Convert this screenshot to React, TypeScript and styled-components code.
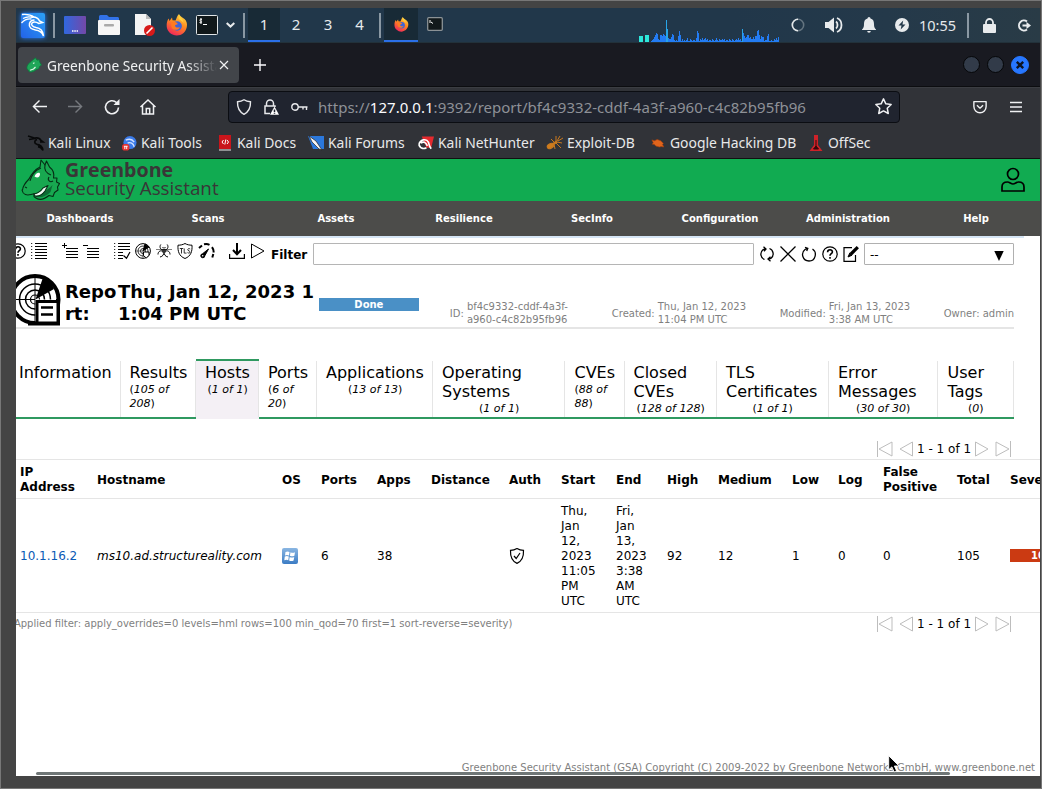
import React from "react";
import styled, { createGlobalStyle } from "styled-components";

const Global = createGlobalStyle`
  * { box-sizing: border-box; }
  body { margin: 0; background: #444; }
  svg { display: block; flex: none; overflow: visible; }
`;

const Frame = styled.div`
  width: 1042px;
  height: 789px;
  padding: 7px 1px 12px 15px;
  background: #444;
  border: 1px solid #777;
`;
const Desktop = styled.div`
  display: flex;
  flex-direction: column;
  position: relative;
  width: 1024px;
  height: 768px;
  overflow: hidden;
  background: #fff;
  font-family: "Noto Sans", sans-serif;
`;

/* ---------- desktop panel ---------- */
const Panel = styled.div`
  display: flex;
  align-items: center;
  height: 34px;
  flex: none;
  background: linear-gradient(90deg, #21374a 0 70%, #24394a 85%, #293b46);
  color: #e6eaec;
  & > * { flex: none; }
`;
const PanelIcon = styled.div<{ $w: number }>`
  width: ${(p) => p.$w}px;
  display: flex;
  justify-content: center;
  align-items: center;
`;
const Divider = styled.div<{ $l?: number; $r?: number }>`
  width: 2px;
  height: 25px;
  margin: 0 ${(p) => p.$r ?? 0}px 0 ${(p) => p.$l ?? 0}px;
  background: #8a98a3;
`;
const Workspace = styled.div<{ $on?: boolean; $w?: number }>`
  width: ${(p) => p.$w ?? 32}px;
  height: 34px;
  display: flex;
  align-items: center;
  justify-content: center;
  font-size: 15px;
  background: ${(p) => (p.$on ? "#182a36" : "transparent")};
  border-bottom: 2px solid ${(p) => (p.$on ? "#2b6fe8" : "transparent")};
`;
const Clock = styled.div`
  width: 39px;
  font-size: 14.5px;
  text-align: center;
  white-space: nowrap;
`;

/* ---------- browser ---------- */
const TabStrip = styled.div`
  display: flex;
  align-items: center;
  height: 45px;
  flex: none;
  background: #191a21;
  border-top: 1px solid #22313a;
  border-bottom: 1px solid #0c0d10;
  padding: 3px 11px 3px 2px;
`;
const BrowserTab = styled.div`
  display: flex;
  align-items: center;
  width: 221px;
  height: 36px;
  padding-left: 8px;
  border-radius: 4px;
  background: #42454a;
  color: #f0f1f2;
`;
const TabTitle = styled.div`
  width: 170px;
  margin: 1px 3px 0 5px;
  overflow: hidden;
  white-space: nowrap;
  font-size: 13.7px;
  mask-image: linear-gradient(90deg, #000 82%, transparent);
`;
const NewTab = styled.div`
  margin-left: 15px;
  flex: 1;
`;
const WinButton = styled.div<{ $close?: boolean }>`
  width: ${(p) => (p.$close ? 18 : 17)}px;
  height: ${(p) => (p.$close ? 18 : 17)}px;
  margin-left: 7px;
  border-radius: 50%;
  border: 1px solid ${(p) => (p.$close ? "#2777ff" : "#050608")};
  background: ${(p) => (p.$close ? "#2777ff" : "#323b49")};
  display: flex;
  align-items: center;
  justify-content: center;
`;
const NavBar = styled.div`
  display: flex;
  align-items: center;
  height: 40px;
  flex: none;
  background: #313338;
  border-top: 1px solid #3b3d42;
  padding: 0 18px 2px 16px;
`;
const NavIcon = styled.div<{ $r: number }>`
  margin-right: ${(p) => p.$r}px;
`;
const UrlBox = styled.div`
  display: flex;
  align-items: center;
  width: 672px;
  height: 32px;
  padding: 0 7px;
  border-radius: 4px;
  background: #20242f;
  border: 1px solid #0b0d12;
`;
const Url = styled.div`
  flex: 1;
  margin-left: 10px;
  font-size: 15px;
  color: #8e9197;
  white-space: nowrap;
  letter-spacing: 0.02px;
  b { font-weight: 400; color: #fbfbfe; }
`;
const EndTools = styled.div`
  display: flex;
  align-items: center;
  gap: 23px;
  margin-left: auto;
`;
const Bookmarks = styled.div`
  display: flex;
  align-items: center;
  height: 32px;
  flex: none;
  background: #313338;
  border-bottom: 1px solid #111;
  padding-left: 12px;
  color: #e8e9ea;
  font-size: 13.9px;
`;
const Bookmark = styled.div<{ $w: number }>`
  display: flex;
  align-items: center;
  gap: 4px;
  width: ${(p) => p.$w}px;
  flex: none;
  white-space: nowrap;
`;

/* ---------- application header ---------- */
const Brand = styled.div`
  display: flex;
  height: 42px;
  flex: none;
  background: #11ab51;
  padding-left: 5px;
`;
const BrandText = styled.div`
  margin-left: 4px;
  flex: 1;
  color: #393637;
  font-family: "Open Sans", sans-serif;
  line-height: 18px;
  padding-top: 2px;
`;
const BrandName = styled.div`
  font-weight: 700;
  font-size: 19.6px;
`;
const BrandSub = styled.div`
  font-size: 18.8px;
`;
const UserSlot = styled.div`
  padding: 8px 15px 0 0;
`;
const Menu = styled.div`
  display: flex;
  align-items: center;
  height: 35px;
  flex: none;
  background: #4c4c4a;
`;
const MenuItem = styled.div`
  width: 128px;
  text-align: center;
  color: #fff;
  font: 700 10px "DejaVu Sans", sans-serif;
`;

/* ---------- page ---------- */
const Page = styled.div`
  flex: 1;
  display: flex;
  flex-direction: column;
  overflow: hidden;
  font-family: "DejaVu Sans", sans-serif;
  font-size: 12px;
  line-height: 15px;
  color: #000;
`;
const BlueLine = styled.div`
  width: 1008px;
  height: 2px;
  flex: none;
  background: #d5e5f5;
`;
const ToolRow = styled.div`
  display: flex;
  height: 32px;
  flex: none;
  margin-left: -6px;
  padding-top: 5px;
`;
const Group = styled.div<{ $r: number; $t?: number }>`
  display: flex;
  gap: 5px;
  margin-right: ${(p) => p.$r}px;
  padding-top: ${(p) => p.$t ?? 0}px;
`;
const FilterLabel = styled.div`
  width: 42px;
  font-weight: 700;
  font-size: 12px;
  line-height: 24px;
`;
const FilterInput = styled.div`
  width: 441px;
  height: 22px;
  border: 1px solid #b5b5b5;
  margin-right: 5px;
  border-radius: 1px;
`;
const SelectBox = styled.div`
  display: flex;
  justify-content: space-between;
  width: 150px;
  height: 22px;
  border: 1px solid #b0b0b0;
  border-radius: 1px;
  padding: 0 9px 0 5px;
  font-size: 12px;
  line-height: 22px;
`;
const ReportHead = styled.div`
  display: flex;
  width: 998px;
  height: 59px;
  flex: none;
  border-bottom: 2px solid #e5e5e5;
`;
const ReportIcon = styled.div`
  width: 57px;
  margin: 4px 0 0 -8px;
`;
const Title = styled.div<{ $w: number }>`
  width: ${(p) => p.$w}px;
  padding-top: 11px;
  font-weight: 700;
  font-size: 18px;
  line-height: 22px;
  white-space: nowrap;
`;
const Done = styled.div`
  width: 100px;
  height: 13px;
  margin: 28px 0 0 1px;
  background: #4a90c6;
  color: #fff;
  font-weight: 700;
  font-size: 10px;
  line-height: 14px;
  text-align: center;
`;
const Info = styled.div<{ $l: number; $w?: number }>`
  display: flex;
  align-items: center;
  gap: 3px;
  width: ${(p) => (p.$w ? p.$w + "px" : "auto")};
  margin-left: ${(p) => p.$l}px;
  padding-top: 30px;
  height: 56px;
  color: #7f7f7f;
  font-size: 10px;
  line-height: 13px;
  white-space: nowrap;
  & > span:first-child { padding-top: 1px; }
`;
const Tabs = styled.div`
  display: flex;
  width: 998px;
  height: 60px;
  flex: none;
  margin-top: 30px;
`;
const Tab = styled.div<{ $w: number; $l?: number; $on?: boolean }>`
  width: ${(p) => p.$w}px;
  flex: none;
  padding-left: ${(p) => p.$l ?? 9}px;
  padding-top: 2px;
  border-top: 2px solid ${(p) => (p.$on ? "#2f9960" : "transparent")};
  border-bottom: 2px solid ${(p) => (p.$on ? "#f4f0f5" : "#2f9960")};
  background: ${(p) => (p.$on ? "#f4f0f5" : "#fff")};
  background-clip: padding-box;
  box-shadow: inset -1px 0 0 #e5e5e5;
  white-space: nowrap;
`;
const TabName = styled.div`
  font-size: 16px;
  line-height: 19px;
`;
const TabCount = styled.div<{ $in?: number }>`
  font-size: 11px;
  line-height: 14px;
  padding-top: 1px;
  padding-left: ${(p) => p.$in ?? 0}px;
`;
const PagerRow = styled.div<{ $t: number }>`
  display: flex;
  height: 20px;
  margin-top: ${(p) => p.$t}px;
`;
const PagerNote = styled.div`
  width: 862px;
  margin-left: -6px;
  color: #7f7f7f;
  font-size: 10px;
  line-height: 20px;
  white-space: nowrap;
`;
const Pager = styled.div`
  display: flex;
  align-items: center;
  gap: 5px;
  margin-left: 5px;
  white-space: nowrap;
`;
const PagerText = styled.span`
  width: 54px;
  margin: 0 -2px 0 -2px;
  padding-top: 1px;
`;
const Grid = styled.div<{ $h: number }>`
  display: grid;
  grid-template-columns: 77px 185px 39px 56px 54px 78px 52px 55px 51px 51px 74px 46px 45px 74px 53px 100px;
  align-items: center;
  height: ${(p) => p.$h}px;
  flex: none;
  padding-left: 4px;
  border-top: 1px solid #e5e5e5;
  & > span, & > a, & > i { padding-top: 2px; }
`;
const Th = styled.span`
  font-weight: 700;
`;
const Link = styled.a`
  color: #0a5ab5;
`;
const Severity = styled.div`
  width: 100px;
  height: 13px;
  background: #cb3a12;
  color: #fff;
  font-weight: 700;
  font-size: 10px;
  line-height: 14px;
  text-align: left;
  padding-left: 21px;
`;
const HostTable = styled.div`
  border-bottom: 1px solid #e5e5e5;
  flex: none;
`;
const Footer = styled.div`
  margin-top: auto;
  padding: 0 5px 1px 0;
  text-align: right;
  color: #7f7f7f;
  font-size: 10px;
`;
const ScrollBar = styled.div`
  position: absolute;
  left: 20px;
  top: 764px;
  width: 914px;
  height: 3px;
  background: #707777;
  border-radius: 2px;
`;
const Cursor = styled.div`
  position: absolute;
  left: 872px;
  top: 747px;
`;

/* ---------- drawings ---------- */
type IconProps = { s?: number; h?: number; vb?: string; c?: string; w?: number; children: React.ReactNode };
const Icon = ({ s = 16, h, vb = "0 0 16 16", c = "#000", w = 1, children }: IconProps) => (
  <svg width={s} height={h ?? s} viewBox={vb} fill="none" stroke={c} strokeWidth={w}>{children}</svg>
);

const KaliLogo = () => (
  <svg width="26" height="27" viewBox="0 0 26 27" style={{ filter: "drop-shadow(0 0 2px #2a7fff)" }}>
    <defs><linearGradient id="kl" x1="0" y1="1" x2="1" y2="0"><stop stopColor="#2363e8" /><stop offset="1" stopColor="#2ba0f5" /></linearGradient></defs>
    <rect x="1" y="1" width="24" height="25" rx="2" fill="url(#kl)" />
    <g fill="none" stroke="#fff" strokeWidth="1.300">
      <path d="M2 2.500c5-.5 9 .2 12 2.500M3 6.500c3-1.800 6-2.200 10-1M1.500 11c3-3.500 6-4.500 10-4" />
      <path d="M11.500 5c4-.5 7 1.500 8 4l3 1.500-3.500 1c-2.500-1.500-5-2.500-7-.5-1.500 2 1 4 4 4.500 4 .5 7 3 7.500 8.500-1.500-4-4-5.500-8-6-4-.6-7-2.500-6-6.500.6-2 2-3.500 5-3.500" strokeWidth="1.500" />
    </g>
  </svg>
);

const BlackDragon = () => (
  <Icon c="#08090a" w={1.7}>
    <path d="M0 1l8 2.500M1 4.500l6-1M7 3c3-.5 5 .5 6 2.500l2 1.500-3 0M9 4.500c-3 1-3 4 0 4.800 3 .5 5.500 1.500 6 6-1.500-2.500-3-3.300-5-3.600" />
  </Icon>
);

const Firefox = ({ s }: { s: number }) => (
  <svg width={s} height={s} viewBox="0 0 22 22">
    <defs>
      <linearGradient id="ff" x1=".8" y1="0" x2=".3" y2="1"><stop stopColor="#ffe04a" /><stop offset=".45" stopColor="#ff8a1f" /><stop offset="1" stopColor="#f0245c" /></linearGradient>
    </defs>
    <path d="M13 0c.5 2 3 3 5.500 5 2 2 3 4.500 2.300 8-1 5-5 8.500-10 8.500S1 17.500.7 12.500C.5 9 1.200 6.500 2.700 4.500L3.500 7 6 3.500l.5 2.700 3 .3c1-2 1.500-4.500 3.500-6.500z" fill="url(#ff)" />
    <circle cx="11.200" cy="12" r="4.700" fill="#3e64d8" />
    <path d="M5 9c2-2 4-1.500 5.500-.5L12 10l-3 1.200c0 2 2 3 5 2-1 3-7 4-8.500 0z" fill="#ff7a22" />
    <path d="M13 1c2 3 4 4 4.500 8-1.500-2.500-3.500-2.500-5-4.500z" fill="#ffd23e" />
  </svg>
);

const Lizard = () => (
  <svg width="16" height="16" viewBox="0 0 16 16">
    <path d="M1 11.500C.5 8 3.500 6 5.500 4L9.500.8l1.500 2.400 2-.5 1 3L15.500 8l-2 1.500-.8 2.500-2.200.3C9 14 6 15.500 3.500 15z" fill="#1fa658" stroke="#0b7a3c" strokeWidth=".8" />
    <path d="M7 6.500l1.500-.7M4 13.200l3.500-1.200 2-2" stroke="#dff5e6" strokeWidth="1.200" fill="none" />
  </svg>
);

const heights = [1,2,3,5,7,9,8,3,2,7,7,6,8,7,6,22,13,4,3,3,5,8,7,2,1,2,1,6,11,7,1,3,1,2,1,2,4,1,1,3,2,1,2,2,1,4,11,9,1,3,2,4,2,3,4,2,3,1,2,2,1,3,2,1,2,4,2,1,3,2,2,3,2,3,1,2,2,1,3,2,1,3,2,1,2,3,2,4,2,3,1,13,9,6,4,5,7,7,4,5,3,3,5,3,6,6,11,12,7,3,6,5,5,1,2,2,6,8,1,1,2,1,1,3,2,4,2,5];
const CpuGraph = () => (
  <svg width="141" height="34" viewBox="0 0 141 34" shapeRendering="crispEdges">
    <rect x="0" y="28" width="4" height="6" fill="#2de8dc" />
    <rect x="6" y="27" width="4" height="7" fill="#2de8dc" />
    {heights.map((v, i) => <rect key={i} x={12 + i} y={34 - v} width="1" height={v} fill={v > 12 ? "#28a5e8" : "#237cf4"} />)}
  </svg>
);

const lines = (x: number, ys: number[], x2 = 16) => ys.map((y) => <path key={y} d={`M${x} ${y}.5H${x2}`} />);
const all = [0, 3, 6, 9, 12, 15];

const HelpIcon = () => <Icon w={1.2}><circle cx="8" cy="8" r="7.200" /><path d="M5.600 6.200c0-3.400 5-3.200 4.800-.2C10.300 7.800 8 7.700 8 9.800M8 11v1.700" strokeWidth="1.600" /></Icon>;
const ListIcon = () => <Icon>{lines(4, all)}<path d="M.7 0v16" strokeDasharray="1 2" /></Icon>;
const PlusList = () => <Icon>{lines(4, [5, 8, 11, 14])}<path d="M0 2.500h5M2.500 0v5" /></Icon>;
const MinusList = () => <Icon>{lines(4, [5, 8, 11, 14])}<path d="M0 2.500h5" /></Icon>;
const CheckList = () => <Icon>{lines(4, [0, 3, 6])}{lines(4, [9, 12, 15], 9)}<path d="M.7 0v16" strokeDasharray="1 2" /><path d="M9.500 12.500l3 2.700L16 9" strokeWidth="1.200" /></Icon>;
const RadarIcon = () => <Icon><circle cx="8" cy="8" r="7.400" /><circle cx="8" cy="8" r="5" strokeWidth=".8" /><circle cx="8" cy="8" r="2.500" strokeWidth=".8" /><path d="M8 8L10 1l4 3z" fill="#000" /><path d="M8.500 9h5.500v3.500l-2.800 2.500-2.700-2.500z" fill="#fff" /><path d="M1 8h7M8 8v7" strokeWidth=".5" /></Icon>;
const BioIcon = () => <Icon><g strokeWidth="1"><path d="M4.800 1.500C3 4 4.500 7.200 8 7.200S13 4 11.200 1.500M7 8.500C5 7 2 8 2 11.500M9 8.500c2-1.500 5-.5 5 3M8 8.500c0 3-1.200 5-4 5.500M8 8.500c0 3 1.200 5 4 5.500" /></g><circle cx="8" cy="7.800" r="2.200" fill="#333" stroke="none" /><path d="M6 4.500h4M0 6.500h16" strokeWidth=".5" /></Icon>;
const TlsIcon = () => <Icon><path d="M8 .5c2 1.200 4.500 1.700 7 1.700.4 6-1 11-7 13.300C2 13.200.6 8.200 1 2.200c2.500 0 5-.5 7-1.700z" /><path d="M2.800 5.500h3.400M4.500 5.500v5M7.200 5.500v4.600h2.300M13.200 6c-1.500-1-3 0-2.200 1.300.6.7 1.800.6 2.100 1.500.2 1.300-1.500 1.600-2.600.8" strokeWidth=".8" /></Icon>;
const GaugeIcon = () => <Icon><path d="M1 5l3-2.600M6 1.300c2-.5 4-.3 5.500.5M14 4.200c1.300 1.800 1.800 3.500 1.600 5.300M15.300 11l-1 3.500" strokeWidth="2" /><path d="M10.500 6L4.500 10.800a2 2 0 1 0 2.300 2z" fill="#000" /><circle cx="4.700" cy="12.800" r=".8" fill="#fff" stroke="none" /></Icon>;
const DownloadIcon = () => <Icon><path d="M8 0v10M4 7l4 4.300L12 7" strokeWidth="2" /><path d="M.6 11v4.400h14.800V11" strokeWidth="1.200" /></Icon>;
const PlayIcon = ({ c = "#000", flip = false }: { c?: string; flip?: boolean }) => <Icon c={c}><path d="M1.500 1l12.500 7-12.500 7z" transform={flip ? "matrix(-1 0 0 1 16 0)" : undefined} /></Icon>;
const EndIcon = ({ flip = false }: { flip?: boolean }) => <Icon c="#bdbdbd"><path d="M1 1l13 7L1 15zM15.500 0v16" transform={flip ? "matrix(-1 0 0 1 16 0)" : undefined} /></Icon>;
const RefreshIcon = () => <Icon w={1.3}><path d="M5.500 13.500C1.500 12 .5 6.500 4 3.700L6.500 3M10.500 2.500C14.500 4 15.500 9.500 12 12.300L9.500 13M4.500.8L7 3 5 5.300M11.500 10.700L9 13l2.500 2.200" /></Icon>;
const CrossIcon = () => <Icon w={1.3}><path d="M.5.5l15 15M15.500.5l-15 15" /></Icon>;
const ResetIcon = () => <Icon w={1.3}><path d="M11.500 3C16.500 6.500 14.500 15 8 15S-.5 7 4 3.500L6.500 2.500M4 1.300l2.800 1L5.700 5" /></Icon>;
const EditIcon = () => <Icon><path d="M9 1.600H1v13.800h11.500V9" strokeWidth="1.200" /><path d="M14.800 1.200L8 8" strokeWidth="3.200" /><path d="M6.800 7L9 9.200 5 11z" fill="#000" /></Icon>;

const ReportDrawing = () => (
  <svg width="52" height="52" viewBox="0 0 52 52" fill="none" stroke="#000">
    <circle cx="27" cy="25.500" r="23.500" strokeWidth="4" />
    <circle cx="27" cy="25.500" r="15.500" strokeWidth="1.500" />
    <circle cx="27" cy="25.500" r="9.500" strokeWidth="1.500" />
    <circle cx="27" cy="25.500" r="4.500" strokeWidth="1.200" />
    <path d="M3 25.500h24M27 3v46" strokeWidth="1" />
    <path d="M27.500 25.500L35 3.500c5 2 9 6.500 11 11.500z" fill="#000" stroke="none" />
    <path d="M29 27h21v23H29z" fill="#fff" stroke="#fff" strokeWidth="3" />
    <path d="M50 25v24.500H20" strokeWidth="4" />
    <path d="M29 27.500h21v21.500H29z" fill="#fff" strokeWidth="3" />
    <path d="M33 33.500h12M33 40.500h12" strokeWidth="2.400" />
  </svg>
);

const DragonHead = () => (
  <svg width="40" height="41" viewBox="0 0 40 41" fill="none" stroke="#062e15" strokeWidth="1.100" strokeLinejoin="round">
    <path d="M1.500 31C2 26 5 23 8 20c3-6 7-10 11-12L20 1l4 5 1.500-4 3 6c4 3 5 6 4 11l3.500 0-.5 4 3 1.500-2 3.500.5 3-3.500 2.500-1.500 4-4-1c-5 4-10 5-14 2-2-1-1-3 0-4l-4 1c-4 1-8 .5-9-4.500z" fill="#18a850" />
    <path d="M12.500 36c7 0 13-4 19-10l-2 7c-4 4-9 6-14 5z" fill="#0d6b34" stroke="none" />
    <path d="M13 35c5-1 7-3 9-6l5-2.500-3 5.500c-3 4-7 5.500-10 5z" fill="#f2faf4" />
    <path d="M13.500 17.500c1-4 6-5 5.500-2s-2.500 4-5.500 2z" fill="#fff" stroke="none" />
    <path d="M20 9c-6 2-10 8-11 13M24 6c-1 4 1 8 6 10M28 18c-2 3 1 6 4 4M4 28l2 1" />
  </svg>
);

const menu = ["Dashboards", "Scans", "Assets", "Resilience", "SecInfo", "Configuration", "Administration", "Help"];

const tabs: { w: number; l?: number; name: string[]; count?: React.ReactNode; inset?: number; on?: boolean }[] = [
  { w: 105, l: 3, name: ["Information"] },
  { w: 75, l: 8.5, name: ["Results"], count: <>(<i>105 of<br />208</i>)</> },
  { w: 63, name: ["Hosts"], count: <>(<i>1 of 1</i>)</>, inset: 2.5, on: true },
  { w: 58, name: ["Ports"], count: <>(<i>6 of<br />20</i>)</> },
  { w: 116, name: ["Applications"], count: <>(<i>13 of 13</i>)</>, inset: 22 },
  { w: 132, name: ["Operating", "Systems"], count: <>(<i>1 of 1</i>)</>, inset: 37 },
  { w: 60, l: 9.5, name: ["CVEs"], count: <>(<i>88 of<br />88</i>)</> },
  { w: 92, l: 8.5, name: ["Closed", "CVEs"], count: <>(<i>128 of 128</i>)</>, inset: 3 },
  { w: 112, name: ["TLS", "Certificates"], count: <>(<i>1 of 1</i>)</>, inset: 26.5 },
  { w: 109, name: ["Error", "Messages"], count: <>(<i>30 of 30</i>)</>, inset: 18 },
  { w: 76, l: 9.5, name: ["User", "Tags"], count: <>(<i>0</i>)</>, inset: 20.5 },
];

const heads: React.ReactNode[] = [<>IP<br />Address</>, "Hostname", "OS", "Ports", "Apps", "Distance", "Auth", "Start", "End", "High", "Medium", "Low", "Log", <>False<br />Positive</>, "Total", "Severity"];

const PagerNav = () => (
  <Pager>
    <EndIcon flip /><PlayIcon c="#bdbdbd" flip /><PagerText>1 - 1 of 1</PagerText><PlayIcon c="#bdbdbd" /><EndIcon />
  </Pager>
);

const W = "#e8ebed";

export default function App() {
  return (
    <Frame>
      <Global />
      <Desktop>
        <Panel>
          <PanelIcon $w={34}><KaliLogo /></PanelIcon>
          <Divider $l={3} $r={4} />
          <PanelIcon $w={32}>
            <svg width="22" height="18" viewBox="0 0 22 18"><defs><linearGradient id="dk" x1="0" x2="1"><stop stopColor="#3068e0" /><stop offset="1" stopColor="#7448a8" /></linearGradient></defs><rect width="22" height="18" rx="1" fill="url(#dk)" /><path d="M8 15h6" stroke="#fff" strokeWidth="1.500" strokeDasharray="1.500 .8" /></svg>
          </PanelIcon>
          <PanelIcon $w={36}>
            <svg width="22" height="20" viewBox="0 0 22 20"><path d="M1 8V1.500Q1 0 2.500 0H9l2 2h9l1 1v6z" fill="#3272e8" /><rect y="5" width="22" height="15" rx="1" fill="#f6f6f6" /><rect x="6" y="9" width="10" height="2.500" rx="1" fill="#aaa" /></svg>
          </PanelIcon>
          <PanelIcon $w={34}>
            <svg width="22" height="22" viewBox="0 0 22 22"><path d="M2 0h11l5 5v16H2z" fill="#f4f4f4" /><path d="M13 0v5h5z" fill="#bbb" /><circle cx="16.500" cy="16.500" r="5.500" fill="#d71a1a" /><path d="M13.500 19.500l6-6" stroke="#fff" strokeWidth="1.600" /></svg>
          </PanelIcon>
          <PanelIcon $w={32}><Firefox s={22} /></PanelIcon>
          <PanelIcon $w={28}>
            <svg width="22" height="20" viewBox="0 0 22 20"><rect x=".5" y=".5" width="21" height="19" rx="1" fill="#11181a" stroke="#e0e4e6" /><path d="M6 4.500c-2-1-3 1-1.500 1.500S6 8.200 3.500 7.500M5 3v6M7 9.500h4" stroke="#fff" fill="none" /></svg>
          </PanelIcon>
          <PanelIcon $w={19}><Icon s={9} h={6} vb="0 0 9 6" c={W} w={2}><path d="M.7 1l3.800 3.600L8.300 1" /></Icon></PanelIcon>
          <Divider $l={3} $r={3} />
          <Workspace $on>1</Workspace><Workspace>2</Workspace><Workspace>3</Workspace><Workspace $w={31}>4</Workspace>
          <Divider $l={4} $r={3} />
          <Workspace $on $w={34}><Firefox s={15} /></Workspace>
          <Workspace $w={34}>
            <svg width="16" height="14" viewBox="0 0 16 14"><rect x=".7" y=".7" width="14.600" height="12.600" rx="1" fill="#12191b" stroke="#8b9296" strokeWidth="1.300" /><path d="M3 3v3M4 5l2 1.500" stroke="#fff" /></svg>
          </Workspace>
          <PanelIcon $w={187} />
          <CpuGraph />
          <PanelIcon $w={36}>
            <Icon s={14} c="#9aa6ad" w={1.8}><circle cx="8" cy="8" r="6.500" opacity=".55" /><path d="M8 14.500A6.500 6.500 0 0 1 8 1.500" stroke="#e2e6e8" /></Icon>
          </PanelIcon>
          <PanelIcon $w={35}>
            <Icon s={18} h={16} vb="0 0 18 16" c={W} w={1.8}><path d="M0 5h3.500L9 .5v15L3.500 11H0z" fill={W} stroke="none" /><path d="M11 4.500c2 1.500 2 5.500 0 7M12 1c6 2.500 6 11.500 0 14" /></Icon>
          </PanelIcon>
          <PanelIcon $w={35}>
            <svg width="14" height="16" viewBox="0 0 14 16" fill={W}><path d="M7 0a1.500 1.500 0 0 1 1.500 1.500C11 2 12 4 12 7c0 3 .5 4 2 5.500V13H0v-.5C1.500 11 2 10 2 7c0-3 1-5 3.500-5.500A1.500 1.500 0 0 1 7 0zM5.200 14h3.600a1.800 1.800 0 0 1-3.600 0z" /></svg>
          </PanelIcon>
          <PanelIcon $w={32}>
            <svg width="14" height="14" viewBox="0 0 14 14"><circle cx="7" cy="7" r="7" fill={W} /><path d="M8.200 2.500L3.500 7.500h3l-.8 4 4.800-5h-3z" fill="#24394a" /></svg>
          </PanelIcon>
          <Clock>10:55</Clock>
          <Divider $l={10} $r={4} />
          <PanelIcon $w={32}>
            <svg width="13" height="15" viewBox="0 0 13 15"><rect y="6" width="13" height="9" rx="1" fill={W} /><path d="M3 7V4.500a3.500 3.500 0 0 1 7 0V7" stroke={W} strokeWidth="1.800" fill="none" /></svg>
          </PanelIcon>
          <PanelIcon $w={37}>
            <Icon s={14} h={13} vb="0 0 14 13" c={W} w={2}><path d="M10 2.500A5 5 0 1 0 10 10.500M5.500 6.500H10" /><path d="M9.500 3l4.500 3.500L9.500 10z" fill={W} stroke="none" /></Icon>
          </PanelIcon>
        </Panel>

        <TabStrip>
          <BrowserTab>
            <Lizard />
            <TabTitle>Greenbone Security Assistant</TabTitle>
            <Icon s={8} vb="0 0 8 8" c="#f0f1f2" w={1.2}><path d="M0 0l8 8M8 0L0 8" /></Icon>
          </BrowserTab>
          <NewTab><Icon s={12} vb="0 0 12 12" c="#fbfbfe" w={1.4}><path d="M6 0v12M0 6h12" /></Icon></NewTab>
          <WinButton /><WinButton />
          <WinButton $close><Icon s={8} vb="0 0 8 8" c="#0e1420" w={2.4}><path d="M.8.8l6.400 6.400M7.200.8L.8 7.200" /></Icon></WinButton>
        </TabStrip>

        <NavBar>
          <NavIcon $r={21}><Icon s={15} c="#f0f1f3" w={1.5}><path d="M16 8H1.500M8 1.500L1.500 8 8 14.500" /></Icon></NavIcon>
          <NavIcon $r={21}><Icon s={15} c="#76797e" w={1.5}><path d="M0 8h14.500M8 1.500L14.500 8 8 14.500" /></Icon></NavIcon>
          <NavIcon $r={20}><Icon s={16} c="#f0f1f3" w={1.6}><path d="M14.500 8.500A6.500 6.500 0 1 1 12.500 3.500L14 5" /><path d="M15.500 0v6h-6z" fill="#f0f1f3" stroke="none" /></Icon></NavIcon>
          <NavIcon $r={72}><Icon s={16} c="#f0f1f3" w={1.5}><path d="M.5 8L8 1l7.500 7M2.500 6.500V15h11V6.500M6.300 15V9.500h3.400V15" /></Icon></NavIcon>
          <UrlBox>
            <NavIcon $r={11}><Icon s={16} c="#e8e9ec" w={1.4}><path d="M8 .8c2 1.400 4.500 1.900 6.500 2 .2 6-2 10.200-6.500 12.500C3.500 13 1.300 8.800 1.500 2.800c2-.1 4.500-.6 6.500-2z" /></Icon></NavIcon>
            <NavIcon $r={12}><Icon s={16} c="#e8e9ec" w={1.5}><path d="M3.500 7V4.500a3.500 3.500 0 0 1 7 0V7M7 14.500H2V7h10v1" /><path d="M11.500 7.500L16 15.800H7z" fill="#fff" stroke="none" /><path d="M11.500 10.500v2.500M11.500 13.800v1" stroke="#20242f" /></Icon></NavIcon>
            <Icon s={17} h={10} vb="0 0 17 10" c="#e8e9ec" w={1.4}><circle cx="4" cy="5" r="3.200" /><path d="M7 5h9.500M12 5v2.500M15.500 5v3" /></Icon>
            <Url>https://<b>127.0.0.1</b>:9392/report/bf4c9332-cddf-4a3f-a960-c4c82b95fb96</Url>
            <Icon s={17} c="#f0f1f3" w={1.4}><path d="M8 .8l2.200 4.700 5 .6-3.700 3.500 1 5L8 12.200l-4.500 2.400 1-5L.8 6.100l5-.6z" strokeLinejoin="round" /></Icon>
          </UrlBox>
          <EndTools>
            <Icon s={14} c="#f0f1f3" w={1.6}><path d="M1 1.800h14v5.700a7 7 0 0 1-14 0zM4.500 6L8 9.300 11.500 6" strokeLinejoin="round" /></Icon>
            <Icon s={12} vb="0 0 12 12" c="#f0f1f3" w={1.3}><path d="M0 1.500h12M0 6h12M0 10.500h12" /></Icon>
          </EndTools>
        </NavBar>

        <Bookmarks>
          <Bookmark $w={94}><BlackDragon />Kali Linux</Bookmark>
          <Bookmark $w={96}><svg width="15" height="16" viewBox="0 0 16 16"><circle cx="8.500" cy="7.500" r="7" fill="#3a7ae8" /><path d="M4 5c4-2 7-1 9 2M6 8c3-1 6 0 7 4" stroke="#cfe0ff" strokeWidth="1.500" fill="none" /><rect y="9" width="8" height="7" rx="3" fill="#e4322f" /><path d="M2 11.500h4M3 11.500v3M5 11.500v3" stroke="#fff" /></svg>Kali Tools</Bookmark>
          <Bookmark $w={90}><svg width="15" height="16" viewBox="0 0 15 16"><rect x="1" width="12" height="14" fill="#c9151b" /><path d="M1 15h12" stroke="#eee" /><path d="M5.500 5L4 7l1.500 2M9 5l1.500 2L9 9M7.800 4.500l-1 5" stroke="#fff" fill="none" /></svg>Kali Docs</Bookmark>
          <Bookmark $w={110}><svg width="16" height="16" viewBox="0 0 16 16"><path d="M0 1h16v13H5z" fill="#2b78dc" /><path d="M1 1l7 5 6 9-3-1-7-7z" fill="#f4f4f4" stroke="#222" strokeWidth=".7" /></svg>Kali Forums</Bookmark>
          <Bookmark $w={129}><svg width="16" height="16" viewBox="0 0 17 16"><path d="M4 1h13l-3 12H9z" fill="#e52a2e" /><path d="M1 10C2 4 9 3 11 7c1 2 0 3 3 7M1 10c2 5 6 4 8 3M3 8c3-2 5-1 7 3" stroke="#fff" strokeWidth="1.800" fill="none" /></svg>Kali NetHunter</Bookmark>
          <Bookmark $w={104}><svg width="16" height="16" viewBox="0 0 16 16" fill="none" stroke="#c8791f" strokeWidth="1"><ellipse cx="3.500" cy="11" rx="3.500" ry="2.300" transform="rotate(-30 3.500 11)" fill="#d07c1c" /><path d="M5.500 9.500l4.500-3" strokeWidth="2.400" /><path d="M8 8L4 4M9 7l0-6M10 6l3-5M11 6l5-3M10 7l5 1M9 8l5 5M7 9l1 5" /></svg>Exploit-DB</Bookmark>
          <Bookmark $w={158}><svg width="15" height="16" viewBox="0 0 17 16"><path d="M1 4.500l3 1 3-1.500 4 1.500 3 3-1 1 1.500 3-3-.5-2 .5-4-1-2-2-2 0 1-2z" fill="#e0641c" stroke="#a8400c" strokeWidth=".7" /></svg>Google Hacking DB</Bookmark>
          <Bookmark $w={80}><svg width="15" height="16" viewBox="0 0 15 16"><path d="M5 0h4v10l4.500 6H.5L5 10z" fill="#cf2229" /><path d="M7 5v6l-2.500 3h5L7 11" stroke="#35090b" fill="#35090b" /></svg>OffSec</Bookmark>
        </Bookmarks>

        <Brand>
          <DragonHead />
          <BrandText><BrandName>Greenbone</BrandName><BrandSub>Security Assistant</BrandSub></BrandText>
          <UserSlot>
            <Icon s={24} h={25} vb="0 0 24 25" w={1.7}><circle cx="12" cy="7" r="5.500" /><path d="M1 24v-4c0-3.500 2-5 5.500-5 2 0 3.500 2 5.500 2s3.500-2 5.500-2c3.500 0 5.500 1.500 5.500 5v4z" /></Icon>
          </UserSlot>
        </Brand>
        <Menu>{menu.map((m) => <MenuItem key={m}>{m}</MenuItem>)}</Menu>

        <Page>
          <BlueLine />
          <ToolRow>
            <Group $r={15}><HelpIcon /><ListIcon /></Group>
            <Group $r={15}><PlusList /><MinusList /></Group>
            <Group $r={15}><CheckList /><RadarIcon /><BioIcon /><TlsIcon /><GaugeIcon /></Group>
            <Group $r={5}><DownloadIcon /><PlayIcon /></Group>
            <FilterLabel>Filter</FilterLabel>
            <FilterInput />
            <Group $r={5} $t={3}><RefreshIcon /><CrossIcon /><ResetIcon /><HelpIcon /><EditIcon /></Group>
            <SelectBox><span>--</span><svg width="10" height="22" viewBox="0 0 10 22"><path d="M.3 7h9.400L5 17z" /></svg></SelectBox>
          </ToolRow>
          <ReportHead>
            <ReportIcon><ReportDrawing /></ReportIcon>
            <Title $w={53}>Repo<br />rt:</Title>
            <Title $w={200}>Thu, Jan 12, 2023 1<br />1:04 PM UTC</Title>
            <Done>Done</Done>
            <Info $l={31} $w={162}><span>ID:</span><span>bf4c9332-cddf-4a3f-<br />a960-c4c82b95fb96</span></Info>
            <Info $l={0} $w={168}><span>Created:</span><span>Thu, Jan 12, 2023<br />11:04 PM UTC</span></Info>
            <Info $l={0} $w={164}><span>Modified:</span><span>Fri, Jan 13, 2023<br />3:38 AM UTC</span></Info>
            <Info $l={0}><span>Owner: admin</span></Info>
          </ReportHead>
          <Tabs>
            {tabs.map((t) => (
              <Tab key={t.name.join()} $w={t.w} $l={t.l} $on={t.on}>
                {t.name.map((n) => <TabName key={n}>{n}</TabName>)}
                {t.count && <TabCount $in={t.inset}>{t.count}</TabCount>}
              </Tab>
            ))}
          </Tabs>
          <PagerRow $t={20}><PagerNote /><PagerNav /></PagerRow>
          <HostTable>
            <Grid $h={39}>{heads.map((h, i) => <Th key={i}>{h}</Th>)}</Grid>
            <Grid $h={114}>
              <Link>10.1.16.2</Link>
              <i>ms10.ad.structureality.com</i>
              <svg width="16" height="16" viewBox="0 0 16 16"><defs><linearGradient id="wn" x1="0" y1="0" x2="0" y2="1"><stop stopColor="#8ab6e2" /><stop offset="1" stopColor="#3b7cc4" /></linearGradient></defs><rect width="16" height="16" rx="2" fill="url(#wn)" /><path d="M3.500 4c1.500-.8 2.500-.8 4 0L7 7.500c-1.500-.7-2.500-.7-4 0zM8.500 4.300c1.500.7 3 .7 4.500 0l-.6 3.500c-1.500.7-3 .7-4.500 0zM2.800 8.600c1.500-.7 2.500-.7 4 0l-.5 3.600c-1.500-.7-2.500-.7-4 0zM7.700 9c1.500.7 3 .7 4.500 0l-.6 3.500c-1.500.7-3 .7-4.500 0z" fill="#fff" /></svg>
              <span>6</span><span>38</span><span />
              <Icon w={1.2}><path d="M8 .6c2 1.200 4.300 1.800 6.500 1.800.3 6-1 10.500-6.500 13-5.500-2.500-6.800-7-6.500-13C3.700 2.400 6 1.800 8 .6z" /><path d="M5 8l2.200 2.500L11 5" /></Icon>
              <span>Thu,<br />Jan<br />12,<br />2023<br />11:05<br />PM<br />UTC</span>
              <span>Fri,<br />Jan<br />13,<br />2023<br />3:38<br />AM<br />UTC</span>
              <span>92</span><span>12</span><span>1</span><span>0</span><span>0</span><span>105</span>
              <Severity>10.0 (High)</Severity>
            </Grid>
          </HostTable>
          <PagerRow $t={1}><PagerNote>(Applied filter: apply_overrides=0 levels=hml rows=100 min_qod=70 first=1 sort-reverse=severity)</PagerNote><PagerNav /></PagerRow>
          <Footer>Greenbone Security Assistant (GSA) Copyright (C) 2009-2022 by Greenbone Networks GmbH, www.greenbone.net</Footer>
        </Page>
        <ScrollBar />
        <Cursor>
          <svg width="12" height="18" viewBox="0 0 12 18"><path d="M.7.7v14l3.200-2.800 2.200 5 2.500-1-2.200-4.900H11z" fill="#000" stroke="#fff" strokeWidth=".9" /></svg>
        </Cursor>
      </Desktop>
    </Frame>
  );
}
